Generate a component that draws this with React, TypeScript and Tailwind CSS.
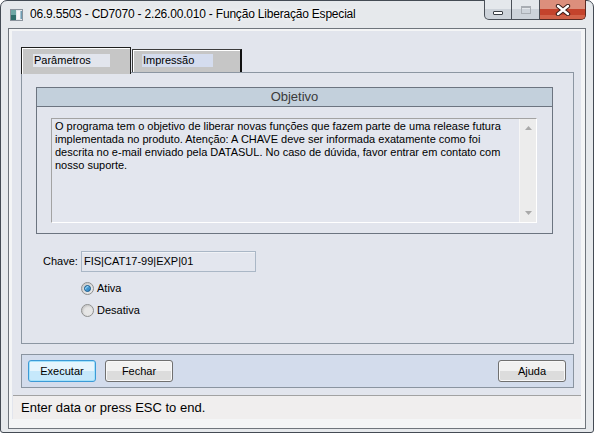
import React from "react";

const F = { fontFamily: '"Liberation Sans", Arial, sans-serif' };

function WinButtons() {
  return (
    <div className="ml-auto mr-[7px] -mt-[1px] flex h-[20px] shrink-0 self-start">
      <div className="relative flex h-[20px] w-[28px] items-center justify-center overflow-hidden rounded-bl-[5px] border border-t-0 border-[#4a5058] bg-[#cdd3da]">
        <div className="absolute inset-x-0 top-0 h-[9px] bg-[#e4e8ec]" />
        <div className="relative mt-[6px] h-[4px] w-[10px] rounded-[1px] border border-[#3a3f45] bg-white" />
      </div>
      <div className="relative flex h-[20px] w-[28px] items-center justify-center overflow-hidden border-b border-r border-[#4a5058] bg-[#cdd3da]">
        <div className="absolute inset-x-0 top-0 h-[9px] bg-[#e4e8ec]" />
        <div className="relative h-[8px] w-[10px] border border-t-2 border-[#a8adb3]" />
      </div>
      <div className="relative flex h-[20px] w-[46px] items-center justify-center overflow-hidden rounded-br-[5px] border-b border-r border-[#5a2a22] bg-[#c4432c]">
        <div className="absolute inset-x-0 top-0 h-[9px] bg-[#dc8f7c]" />
        <div className="absolute inset-x-0 bottom-0 h-[4px] bg-[#d26249]" />
        <svg width="16" height="12" viewBox="0 0 16 12" className="relative">
          <path d="M3 2 L13 10 M13 2 L3 10" stroke="#3a1e1a" strokeWidth="4.4" strokeLinecap="round" />
          <path d="M3 2 L13 10 M13 2 L3 10" stroke="#ffffff" strokeWidth="2.4" strokeLinecap="round" />
        </svg>
      </div>
    </div>
  );
}

function AppIcon() {
  return (
    <svg width="13" height="12" viewBox="0 0 13 12" className="shrink-0">
      <rect x="0.5" y="0.5" width="12" height="11" fill="#e4e8ec" stroke="#8a939c" />
      <rect x="1" y="1" width="5" height="5" fill="#6ea8a6" />
      <rect x="1" y="6" width="5" height="5" fill="#2f6f6c" />
      <rect x="7" y="2" width="3" height="8" fill="#f6f7f8" />
      <rect x="10.5" y="2" width="1.5" height="8" fill="#6f9db3" />
    </svg>
  );
}

function Btn({ label, focused }: { label: string; focused?: boolean }) {
  return (
    <div
      className={
        "relative flex h-[22px] w-[68px] items-center justify-center overflow-hidden rounded-[3px] border text-[11px] text-black " +
        (focused
          ? "border-[#3c9ad6] bg-[#c6e8fb] shadow-[inset_0_0_0_1px_#a4e2fb]"
          : "border-[#707070] bg-[#dcdcdc] shadow-[inset_0_0_0_1px_#f8f8f8]")
      }
    >
      <div
        className={
          "absolute inset-x-[1px] top-[1px] h-[9px] " + (focused ? "bg-[#e6f5fd]" : "bg-[#f1f1f1]")
        }
      />
      <span className="relative">{label}</span>
    </div>
  );
}

function Radio({ checked, label }: { checked?: boolean; label: string }) {
  return (
    <div className="flex h-[13px] items-center">
      <div className="flex h-[13px] w-[13px] items-center justify-center rounded-full border border-[#8e8f8f] bg-[#e6e6e6] shadow-[inset_1px_1px_2px_#c4c4c4]">
        {checked && (
          <div className="h-[7px] w-[7px] rounded-full border border-[#1b5b8c] bg-[#3a8fcc] shadow-[inset_1px_1px_1px_#9fdcf9]" />
        )}
      </div>
      <span className="ml-[3px] text-[11px] text-black">{label}</span>
    </div>
  );
}

export default function App() {
  return (
    <div className="h-[433px] w-[594px] bg-white" style={F}>
      <div className="flex h-[433px] w-[594px] flex-col rounded-t-[7px] rounded-b-[3px] border border-[#444b54] bg-[#e6e9ec]">
        {/* title bar */}
        <div className="flex h-[27px] shrink-0 items-start">
          <div className="ml-[9px] mt-[8px]">
            <AppIcon />
          </div>
          <div className="ml-[7px] mt-[6px] text-[12px] leading-[15px] tracking-[-0.2px] text-black [text-shadow:0_0_6px_#fff,0_0_3px_#fff]">
            06.9.5503 - CD7070 - 2.26.00.010 - Função Liberação Especial
          </div>
          <WinButtons />
        </div>

        {/* frame inner */}
        <div className="mx-[7px] mb-[3px] flex flex-1 border border-[#6f757c] bg-[#f4f5f6] pb-[9px] pl-[3px] pr-[4px] pt-[2px]">
          <div className="flex flex-1 flex-col bg-[#e2e5ed]">
            {/* tabs */}
            <div className="ml-[9px] mt-[16px] flex h-[25px] items-end">
              <div className="relative z-10 -mb-[2px] flex h-[27px] w-[110px] items-start border border-b-0 border-[#1e1e1e] bg-[#c6c6c6] shadow-[inset_1px_1px_0_#ffffff]">
                <div className="ml-[11px] mt-[6px] flex h-[13px] w-[77px] items-center bg-[#e2e5ed] pl-[1px] text-[11px] text-black">
                  Parâmetros
                </div>
              </div>
              <div className="ml-[1px] flex h-[23px] w-[110px] items-start border border-b-0 border-r-2 border-[#3c3c3c] border-r-[#111] bg-[#c6c6c6] shadow-[inset_1px_1px_0_#ffffff]">
                <div className="ml-[9px] mt-[4px] flex h-[13px] w-[71px] items-center bg-[#d4dcee] pl-[1px] text-[11px] text-black">
                  Impressão
                </div>
              </div>
            </div>

            {/* panel */}
            <div className="ml-[9px] mr-[7px] flex h-[272px] flex-col border border-[#8c96a2]">
              {/* group */}
              <div className="ml-[14px] mt-[14px] flex h-[147px] w-[517px] flex-col border border-[#6c7480]">
                <div className="flex h-[19px] items-center justify-center border-b border-[#6c7480] bg-[#c3d0dc] text-[13px] text-[#3a3a3a]">
                  Objetivo
                </div>
                <div className="ml-[14px] mt-[11px] flex h-[105px] w-[486px] border border-b-[#ffffff] border-l-[#a3a3a3] border-r-[#ffffff] border-t-[#a3a3a3] bg-[#e3e6ee]">
                  <div className="flex-1 pl-[3px] pt-[1px] text-[11px] leading-[13px] text-black">
                    O programa tem o objetivo de liberar novas funções que fazem parte de uma release futura
                    implementada no produto. Atenção: A CHAVE deve ser informada exatamente como foi
                    descrita no e-mail enviado pela DATASUL. No caso de dúvida, favor entrar em contato com
                    nosso suporte.
                  </div>
                  <div className="flex w-[17px] flex-col items-center justify-between border-l border-[#f6f6f6] bg-[#ececec] py-[7px]">
                    <svg width="7" height="4" viewBox="0 0 7 4">
                      <path d="M0 4 L3.5 0 L7 4 Z" fill="#a9a9a9" />
                    </svg>
                    <svg width="7" height="4" viewBox="0 0 7 4">
                      <path d="M0 0 L3.5 4 L7 0 Z" fill="#a9a9a9" />
                    </svg>
                  </div>
                </div>
              </div>

              {/* chave */}
              <div className="ml-[21px] mt-[17px] flex items-center">
                <span className="w-[38px] text-[11px] text-black">Chave:</span>
                <div className="flex h-[21px] w-[175px] items-center border border-[#aab7c6] bg-[#e3e6ee] pl-[2px] text-[11px] text-black shadow-[inset_0_1px_0_#f0f2f6]">
                  FIS|CAT17-99|EXP|01
                </div>
              </div>

              <div className="ml-[59px] mt-[10px] flex flex-col gap-[9px]">
                <Radio checked label="Ativa" />
                <Radio label="Desativa" />
              </div>
            </div>

            {/* button bar */}
            <div className="ml-[9px] mr-[7px] mt-[10px] flex h-[34px] items-center border border-[#8a94a0] bg-[#d3dcec] pl-[6px] pr-[7px]">
              <Btn label="Executar" focused />
              <div className="ml-[9px]">
                <Btn label="Fechar" />
              </div>
              <div className="ml-auto">
                <Btn label="Ajuda" />
              </div>
            </div>

            {/* status */}
            <div className="ml-[1px] mt-[7px] flex h-[24px] items-center border-t border-[#a2a2a2] bg-[#f0eeee] pl-[8px] text-[13px] text-black">
              Enter data or press ESC to end.
            </div>
          </div>
        </div>
      </div>
    </div>
  );
}
